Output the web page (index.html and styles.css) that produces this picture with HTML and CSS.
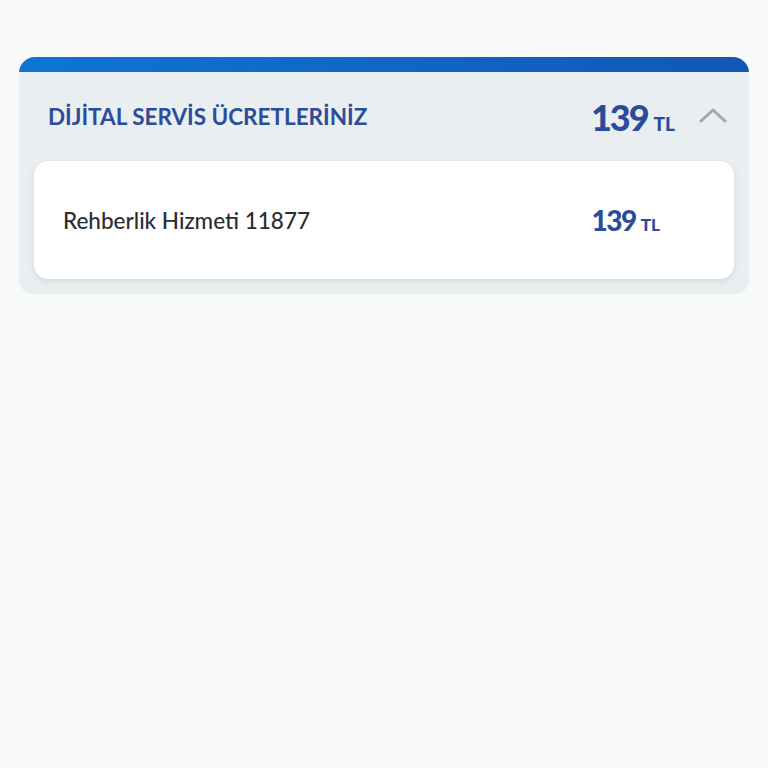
FILE: index.html
```html
<!DOCTYPE html>
<html lang="tr">
<head>
<meta charset="utf-8">
<link rel="stylesheet" href="styles.css">
</head>
<body>
<div class="page">
  <section class="card">
    <div class="card-bar"></div>
    <div class="card-head">
      <h2 class="title">DİJİTAL SERVİS ÜCRETLERİNİZ</h2>
      <div class="total"><span class="num">139</span><span class="cur">TL</span></div>
      <svg class="chev" width="28" height="16" viewBox="0 0 28 16"><path d="M2 14 L14 3 L26 14" fill="none" stroke="#a3a7ae" stroke-width="3" stroke-linecap="round" stroke-linejoin="round"/></svg>
    </div>
    <div class="item">
      <span class="item-name">Rehberlik Hizmeti 11877</span>
      <div class="item-price"><span class="num">139</span><span class="cur">TL</span></div>
    </div>
  </section>
</div>
</body>
</html>
```

FILE: styles.css
```css
html, body {
  margin: 0;
  padding: 0;
  background: #f8f9f9;
  font-family: Lato, "Open Sans", sans-serif;
}
.page {
  padding: 57px 19px 0 19px;
}
.card {
  background: #e9eef0;
  border-radius: 16px 16px 14px 14px;
  overflow: hidden;
  padding-bottom: 15px;
}
.card-bar {
  height: 15px;
  background: linear-gradient(90deg, #0f75d4 0%, #1357b5 100%);
}
.card-head {
  display: flex;
  align-items: center;
  height: 89px;
  padding: 0 22px 0 29px;
}
.title {
  margin: 0;
  flex: 1;
  font-size: 22.5px;
  font-weight: 700;
  color: #2b4c9b;
  letter-spacing: 0;
}
.total {
  display: flex;
  align-items: baseline;
  color: #2b4c9b;
  margin-right: 24px;
}
.total .num {
  font-size: 36px;
  font-weight: 900;
  letter-spacing: -2px;
}
.total .cur {
  font-size: 19px;
  margin-left: 6px;
  font-weight: 900;
}
.chev {
  display: block;
  margin-top: -4px;
}
.item {
  margin: 0 15px;
  background: #ffffff;
  border-radius: 14px;
  box-shadow: 0 2px 6px rgba(0,0,0,0.10);
  height: 118px;
  display: flex;
  align-items: center;
  padding: 0 74px 0 29px;
}
.item-name {
  flex: 1;
  font-size: 22.5px;
  color: #2a2d33;
  font-weight: 500;
}
.item-price {
  display: flex;
  align-items: baseline;
  color: #2b4c9b;
}
.item-price .num {
  font-size: 28px;
  font-weight: 900;
  letter-spacing: -1.5px;
}
.item-price .cur {
  font-size: 17px;
  margin-left: 5px;
  font-weight: 900;
}
```
